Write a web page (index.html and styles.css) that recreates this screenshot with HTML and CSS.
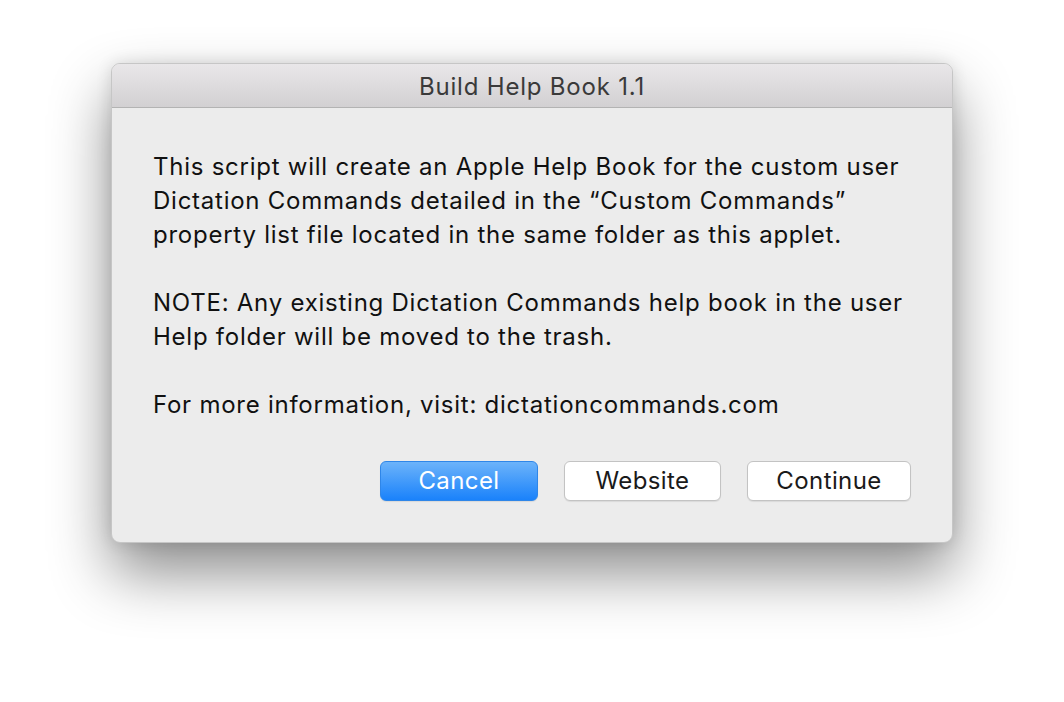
FILE: index.html
```html
<!DOCTYPE html>
<html>
<head>
<meta charset="utf-8">
<link rel="stylesheet" href="styles.css">
</head>
<body>
<div class="window">
  <div class="titlebar">Build Help Book 1.1</div>
  <div class="content">
    <p>This script will create an Apple Help Book for the custom user<br>Dictation Commands detailed in the “Custom Commands”<br>property list file located in the same folder as this applet.</p>
    <p>NOTE: Any existing Dictation Commands help book in the user<br>Help folder will be moved to the trash.</p>
    <p>For more information, visit: dictationcommands.com</p>
    <div class="buttons">
      <div class="btn primary">Cancel</div>
      <div class="btn">Website</div>
      <div class="btn wide">Continue</div>
    </div>
  </div>
</div>
</body>
</html>
```
FILE: styles.css
```css
html, body {
  margin: 0;
  padding: 0;
  background: #ffffff;
  width: 1064px;
  height: 702px;
  overflow: hidden;
}
body {
  padding-top: 63px;
  box-sizing: border-box;
  font-family: Inter, "Noto Sans", sans-serif;
}
.window {
  margin-left: 111px;
  width: 842px;
  height: 480px;
  box-sizing: border-box;
  border-radius: 9px;
  overflow: hidden;
  background: #ececec;
  border: 1px solid #c6c6c6;
  box-shadow: 0 30px 60px rgba(0,0,0,0.45), 0 0 16px rgba(0,0,0,0.12);
}
.titlebar {
  height: 43px;
  line-height: 46px;
  text-align: center;
  font-size: 24px;
  letter-spacing: 0.8px;
  color: #3a3a3a;
  background: linear-gradient(#e9e7e9, #d2d0d2);
  border-bottom: 1px solid #b3b3b3;
}
.content {
  padding: 42px 41px 0 41px;
  font-size: 24px;
  letter-spacing: 0.75px;
  color: #111;
}
.content p {
  margin: 0 0 34px 0;
  line-height: 34px;
  white-space: nowrap;
}
.content p:last-of-type {
  margin-bottom: 39px;
}
.buttons {
  display: flex;
  justify-content: flex-end;
  gap: 26px;
}
.btn {
  width: 157px;
  height: 40px;
  box-sizing: border-box;
  border-radius: 6px;
  background: #ffffff;
  border: 1px solid #c3c3c3;
  box-shadow: 0 1px 1px rgba(0,0,0,0.08);
  text-align: center;
  line-height: 38px;
  font-size: 24px;
  letter-spacing: 0.4px;
  color: #1a1a1a;
}
.btn.wide { width: 164px; }
.btn.primary {
  width: 158px;
  background: linear-gradient(#6cb3fa, #1a82fb);
  border: 1px solid #2f86e8;
  color: #ffffff;
}
```
